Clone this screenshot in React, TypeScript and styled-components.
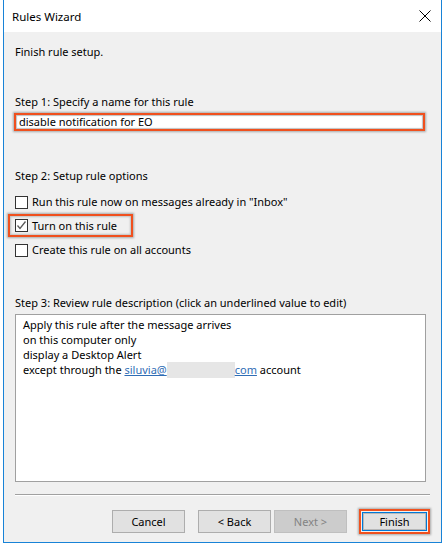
import * as React from "react";
import styled, { createGlobalStyle } from "styled-components";

const GlobalStyle = createGlobalStyle`
  html, body {
    margin: 0;
    padding: 0;
    background: #ffffff;
  }
  body {
    font-family: "Noto Sans", "Open Sans", sans-serif;
    font-size: 11px;
    color: #000;
  }
`;

const options = [
  { label: 'Run this rule now on messages already in "Inbox"', checked: false, marked: false },
  { label: "Turn on this rule", checked: true, marked: true },
  { label: "Create this rule on all accounts", checked: false, marked: false },
];

const App = () => {
  return (
    <>
      <GlobalStyle />
      <Window>
        <TitleBar>
          <Title>Rules Wizard</Title>
          <Close>
            <svg width="12" height="12" viewBox="0 0 12 12">
              <path d="M0.5 0.5 L11.5 11.5 M11.5 0.5 L0.5 11.5" stroke="#000" strokeWidth="1" fill="none" />
            </svg>
          </Close>
        </TitleBar>
        <Body>
          <Intro>Finish rule setup.</Intro>
          <StepLabel $gap={34}>Step 1: Specify a name for this rule</StepLabel>
          <NameBox>
            <NameInput>disable notification for EO</NameInput>
          </NameBox>
          <StepLabel $gap={37}>Step 2: Setup rule options</StepLabel>
          <Options>
            {options.map((o) => (
              <OptionRow key={o.label} $marked={o.marked}>
                <CheckBox>
                  {o.checked && (
                    <svg width="11" height="11" viewBox="0 0 11 11">
                      <path d="M1.5 5.5 L4 8.5 L9.5 1.5" stroke="#5a5a5a" strokeWidth="1.3" fill="none" />
                    </svg>
                  )}
                </CheckBox>
                <span>{o.label}</span>
              </OptionRow>
            ))}
          </Options>
          <StepLabel $gap={33}>Step 3: Review rule description (click an underlined value to edit)</StepLabel>
          <Description>
            <div>Apply this rule after the message arrives</div>
            <div>on this computer only</div>
            <div>display a Desktop Alert</div>
            <div>
              except through the <LinkText>siluvia@</LinkText>
              <Redacted />
              <LinkText>com</LinkText> account
            </div>
          </Description>
          <Separator />
          <Buttons>
            <Button>Cancel</Button>
            <Button $left={13}>&lt; Back</Button>
            <Button $left={3} disabled>
              Next &gt;
            </Button>
            <FinishMark>
              <DefaultButton>Finish</DefaultButton>
            </FinishMark>
          </Buttons>
        </Body>
      </Window>
    </>
  );
};

export default App;

const Window = styled.div`
  margin-left: 3px;
  width: 437px;
  height: 542px;
  border: 1px solid #1883d7;
  border-top: none;
  display: flex;
  flex-direction: column;
  background: #f0f0f0;
`;

const TitleBar = styled.div`
  height: 32px;
  background: #ffffff;
  display: flex;
  align-items: center;
  justify-content: space-between;
  padding: 0 10px 0 8px;
  flex-shrink: 0;
`;

const Title = styled.span`
  font-size: 11.5px;
  padding-top: 1px;
`;

const Close = styled.span`
  display: flex;
  padding-bottom: 1px;
`;

const Body = styled.div`
  flex: 1;
  display: flex;
  flex-direction: column;
  padding: 12px 0 0 11px;
  line-height: 16px;
`;

const Intro = styled.div``;

const StepLabel = styled.div<{ $gap: number }>`
  margin-top: ${(p) => p.$gap}px;
`;

const NameBox = styled.div`
  margin: 3px 0 0 -1px;
  width: 407px;
  height: 14px;
  border: 2px solid #f0501e;
  box-shadow: 0 0 2px 1px rgba(0, 0, 0, 0.3), inset 0 0 1px 1px rgba(0, 0, 0, 0.25);
  background: #ffffff;
  display: flex;
  align-items: center;
`;

const NameInput = styled.div`
  padding-left: 3px;
  line-height: 14px;
`;

const Options = styled.div`
  margin-top: 6px;
  display: flex;
  flex-direction: column;
`;

const OptionRow = styled.div<{ $marked: boolean }>`
  height: 24px;
  display: flex;
  align-items: center;
  gap: 4px;
  box-sizing: border-box;
  ${(p) =>
    p.$marked &&
    `
    margin-left: -7px;
    padding-left: 5px;
    width: 125px;
    height: 23px;
    margin-bottom: 1px;
    border: 2px solid #f0501e;
    box-shadow: 0 0 2px 1px rgba(0, 0, 0, 0.3), inset 0 0 2px 1px rgba(0, 0, 0, 0.2);
  `}
`;

const CheckBox = styled.span`
  width: 11px;
  height: 11px;
  border: 1px solid #333333;
  background: #ffffff;
  display: flex;
  align-items: center;
  justify-content: center;
  flex-shrink: 0;
`;

const Description = styled.div`
  margin-top: 3px;
  width: 402px;
  height: 164px;
  border: 1px solid #a0a0a0;
  background: #ffffff;
  padding: 2px 0 0 7px;
  line-height: 15px;
`;

const LinkText = styled.span`
  color: #2f6db5;
  text-decoration: underline;
`;

const Redacted = styled.span`
  display: inline-block;
  width: 68px;
  height: 16px;
  vertical-align: -4px;
  background: #e6e6e6;
`;

const Separator = styled.div`
  margin-top: 12px;
  width: 415px;
  height: 1px;
  background: #a0a0a0;
  border-bottom: 1px solid #ffffff;
`;

const Buttons = styled.div`
  margin-top: 13px;
  display: flex;
  align-items: center;
  padding-left: 97px;
`;

const Button = styled.button<{ $left?: number }>`
  margin-left: ${(p) => p.$left ?? 0}px;
  width: 73px;
  height: 23px;
  padding: 0;
  font-family: inherit;
  font-size: 11px;
  color: #000;
  background: #e1e1e1;
  border: 1px solid #adadad;

  &:disabled {
    color: #838383;
    background: #cccccc;
    border-color: #bfbfbf;
  }
`;

const FinishMark = styled.div`
  margin-left: 12px;
  padding: 1px;
  border: 2px solid #f0501e;
  box-shadow: 0 0 2px 1px rgba(0, 0, 0, 0.3);
  display: flex;
`;

const DefaultButton = styled.button`
  width: 65px;
  height: 19px;
  padding: 0;
  font-family: inherit;
  font-size: 11px;
  color: #000;
  background: #e1e1e1;
  border: 1px solid #0078d7;
  box-shadow: inset 0 0 0 1px #b8b8b8;
`;
